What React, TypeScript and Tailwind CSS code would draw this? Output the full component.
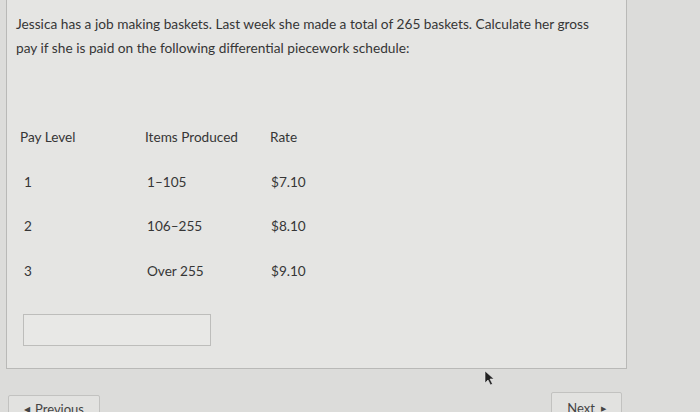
const rows = [
  { level: "1", items: "1–105", rate: "$7.10" },
  { level: "2", items: "106–255", rate: "$8.10" },
  { level: "3", items: "Over 255", rate: "$9.10" },
];

export default function App() {
  return (
    <div
      className="relative h-[412px] w-[700px] overflow-hidden bg-[#dcdcda] text-[#363636]"
      style={{ fontFamily: "Lato, 'Noto Sans', sans-serif" }}
    >
      {/* question panel */}
      <div className="ml-[6px] -mt-px h-[370px] w-[621px] border border-[#b9b9b7] bg-[#e5e5e3]">
        <p className="w-[600px] pl-[9px] pt-[12px] text-[13.7px] leading-[24px]">
          Jessica has a job making baskets. Last week she made a total of 265 baskets. Calculate her gross
          pay if she is paid on the following differential piecework schedule:
        </p>

        <div className="mt-[67px] pl-[13px] text-[13.6px]">
          <div className="grid h-[20px] grid-cols-[125px_125px_100px] items-center">
            <span>Pay Level</span>
            <span>Items Produced</span>
            <span>Rate</span>
          </div>
          {rows.map((r) => (
            <div key={r.level} className="mt-[24.5px] grid h-[20px] grid-cols-[125px_125px_100px] items-center">
              <span className="pl-[4px]">{r.level}</span>
              <span className="pl-[2px]">{r.items}</span>
              <span className="pl-[1px]">{r.rate}</span>
            </div>
          ))}
        </div>

        <div className="ml-[16px] mt-[33px] h-[32px] w-[188px] border border-[#bdbdbb] bg-[#e8e8e6]" />
      </div>

      {/* nav buttons */}
      <div className="flex justify-between px-[8px] pr-[78px]">
        <div className="mt-[26px] flex h-[30px] w-[92px] items-start justify-center rounded-t-[2px] border border-[#c2c2c0] bg-[#e2e2e0] pt-[4px] text-[13px] text-[#444]">
          <span className="mr-[5px] text-[8px] leading-[18px]">◀</span>Previous
        </div>
        <div className="mt-[23px] flex h-[30px] w-[71px] items-start justify-center rounded-t-[2px] border border-[#c2c2c0] bg-[#e2e2e0] pt-[6px] text-[13px] text-[#444]">
          Next<span className="ml-[6px] text-[7px] leading-[18px]">▶</span>
        </div>
      </div>

      {/* mouse cursor */}
      <svg className="absolute left-[484px] top-[370px]" width="11" height="16" viewBox="0 0 11 16">
        <path d="M1 1 L1 13 L4 10 L6.5 15 L8.5 14 L6 9 L10 9 Z" fill="#222" stroke="#eee" strokeWidth="0.6" />
      </svg>
    </div>
  );
}
